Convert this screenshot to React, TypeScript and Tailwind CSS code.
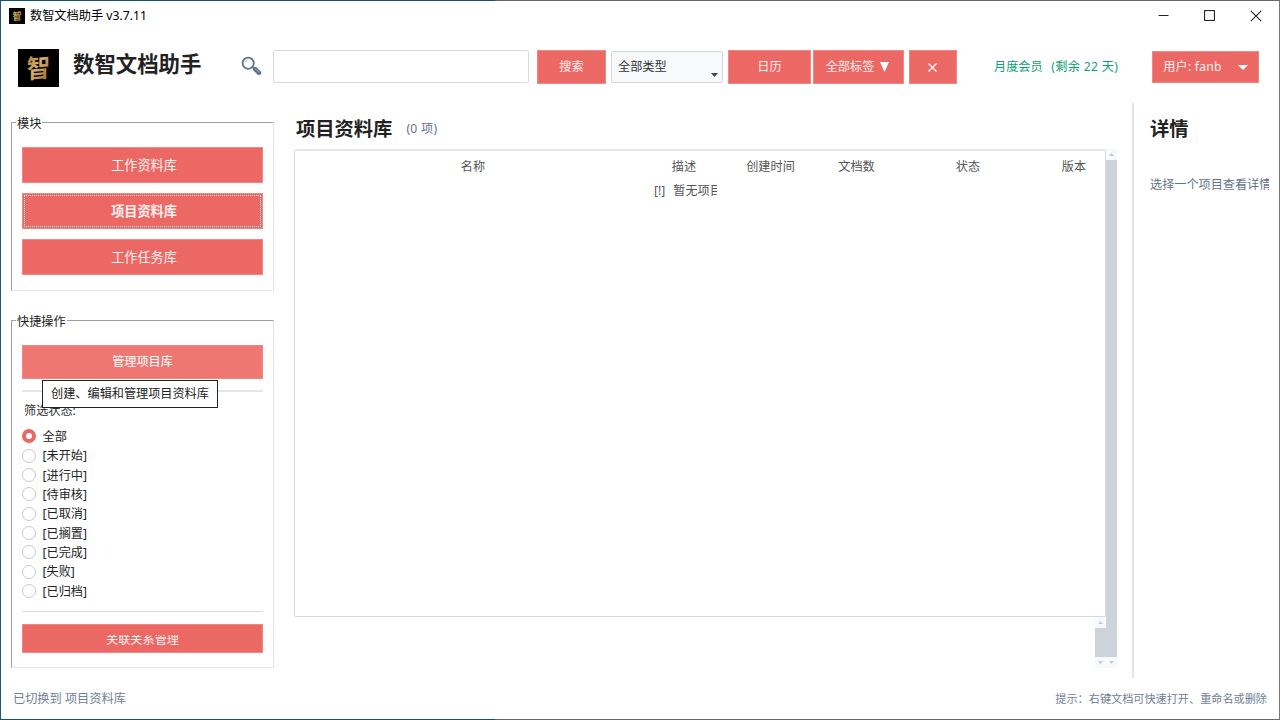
import * as React from "react";
import clsx from "clsx";

const modules = [
  { name: "工作资料库", active: false },
  { name: "项目资料库", active: true },
  { name: "工作任务库", active: false },
];

const statuses = [
  "全部",
  "[未开始]",
  "[进行中]",
  "[待审核]",
  "[已取消]",
  "[已搁置]",
  "[已完成]",
  "[失败]",
  "[已归档]",
];

const columns = [
  { name: "名称", width: "w-[356px]" },
  { name: "描述", width: "w-[66px]" },
  { name: "创建时间", width: "w-[107px]" },
  { name: "文档数", width: "w-[65px]" },
  { name: "状态", width: "w-[158px]" },
  { name: "版本", width: "w-[54px]" },
];

function RedButton({ className, children }: { className?: string; children: React.ReactNode }) {
  return (
    <button
      type="button"
      className={clsx(
        "flex shrink-0 items-center justify-center border border-[#f08783] bg-[#ec6864] whitespace-nowrap text-white/90",
        className,
      )}
    >
      {children}
    </button>
  );
}

function Group({ title, className, children }: { title: string; className?: string; children: React.ReactNode }) {
  return (
    <section
      className={clsx(
        "relative flex w-[263px] shrink-0 flex-col border border-t-[#a0a0a0] border-r-[#e6e6e6] border-b-[#e6e6e6] border-l-[#a0a0a0] px-[10px]",
        className,
      )}
    >
      <h2 className="absolute -top-[7px] left-[4px] bg-white pr-px pl-px text-[12.15px] leading-[16px] text-[#222]">
        {title}
      </h2>
      {children}
    </section>
  );
}

function Logo({ className }: { className?: string }) {
  return (
    <svg viewBox="0 0 40 38" preserveAspectRatio="none" className={className}>
      <defs>
        <linearGradient id="gold" x1="0" y1="0" x2="1" y2="1">
          <stop offset="0" stopColor="#a77432" />
          <stop offset="0.45" stopColor="#d6ad6c" />
          <stop offset="1" stopColor="#8a5a1e" />
        </linearGradient>
      </defs>
      <rect width="40" height="38" fill="#000" />
      <text
        x="0"
        y="0"
        textAnchor="middle"
        fontSize="24"
        fontWeight="700"
        fill="url(#gold)"
        transform="translate(20 28.5) skewY(-5) scale(0.95 1.07)"
      >
        智
      </text>
    </svg>
  );
}

function Arrow({ down }: { down?: boolean }) {
  return (
    <div className="flex h-[11px] w-[11px] items-center justify-center bg-[#f8f9fc]">
      <svg width="5" height="3" viewBox="0 0 5 3">
        <path d={down ? "M0 0h5L2.5 3z" : "M0 3h5L2.5 0z"} fill="#c5c9d1" />
      </svg>
    </div>
  );
}

function TitleBar() {
  return (
    <header className="flex h-[30px] shrink-0 items-center pr-[17px] pl-[8px]">
      <Logo className="-mt-px h-[16px] w-[16px]" />
      <span className="ml-[5px] text-[12.2px] text-black">数智文档助手 v3.7.11</span>
      <div className="-mt-px ml-auto flex items-center gap-[35px]">
        <svg width="11" height="11" viewBox="0 0 11 11" stroke="#222">
          <path d="M0.5 5.5h10" />
        </svg>
        <svg width="11" height="11" viewBox="0 0 11 11" fill="none" stroke="#111">
          <rect x="0.6" y="0.6" width="9.8" height="9.8" />
        </svg>
        <svg width="12" height="12" viewBox="0 0 12 12" stroke="#222" strokeWidth="1.1">
          <path d="M0.8 0.8l10.4 10.4M11.2 0.8L0.8 11.2" />
        </svg>
      </div>
    </header>
  );
}

function Toolbar() {
  return (
    <div className="flex h-[72px] shrink-0 items-start pt-[19px] pl-[17px] text-[12.15px]">
      <Logo className="-mt-px h-[38px] w-[41px]" />
      <h1 className="mt-px ml-[14px] w-[160px] text-[21.4px] leading-[26px] font-bold text-[#222]">数智文档助手</h1>
      <svg width="21" height="20" viewBox="0 0 21 20" className="mt-[6px] ml-[8px]" fill="none">
        <path d="M11.8 11.4l1.6 1.4" stroke="#64748b" strokeWidth="2" />
        <path d="M14.2 13.2l3.8 3.6" stroke="#5c708b" strokeWidth="4.4" strokeLinecap="round" />
        <path d="M14.2 12.8l3.6 3.2" stroke="#a3b0c0" strokeWidth="1" strokeLinecap="round" />
        <circle cx="7.2" cy="7.2" r="5.6" fill="#fff" stroke="#64748b" strokeWidth="1.8" />
        <path d="M4.4 6.4a3.1 3.1 0 0 1 2.4-2.4" stroke="#b8c2cf" />
      </svg>
      <input className="ml-[11px] h-[33px] w-[256px] rounded-[2px] border border-[#d5dbe0] bg-white" />
      <RedButton className="ml-[8px] h-[34px] w-[69px]">搜索</RedButton>
      <div className="relative ml-[5px] mt-px flex h-[32px] w-[112px] items-center rounded-[2px] border border-[#d3d7dc] bg-[#f8f9fb] pl-[6px] text-[#333]">
        全部类型
        <svg width="7" height="4" viewBox="0 0 7 4" className="absolute right-[4px] bottom-[5px]">
          <path d="M0 0h7L3.5 4z" fill="#444" />
        </svg>
      </div>
      <RedButton className="ml-[5px] h-[34px] w-[83px]">日历</RedButton>
      <RedButton className="ml-[2px] h-[34px] w-[91px] pr-[2px]">
        全部标签
        <svg width="9" height="10" viewBox="0 0 8 10" preserveAspectRatio="none" className="ml-[6px]">
          <path d="M0 0h8L4 10z" fill="#fff" />
        </svg>
      </RedButton>
      <RedButton className="ml-[5px] h-[34px] w-[48px] pr-px">
        <svg width="9" height="9" viewBox="0 0 9 9" stroke="#fff" strokeWidth="1.3">
          <path d="M0.5 0.5l8 8M8.5 0.5l-8 8" />
        </svg>
      </RedButton>
      <span className="mt-[8px] ml-[37px] w-[126px] leading-[18px] whitespace-pre text-[#0f9f72]">
        月度会员 <span className="ml-[2px] tracking-[0.35px]"> (剩余 22 天)</span>
      </span>
      <RedButton className="mt-px ml-[32px] h-[32px] w-[107px]">
        <span className="tracking-[0.25px]">用户: fanb</span>
        <svg width="10" height="5" viewBox="0 0 10 5" className="ml-[16px]">
          <path d="M0 0h10L5 5z" fill="#fff" />
        </svg>
      </RedButton>
    </div>
  );
}

function Sidebar() {
  return (
    <aside className="flex w-[263px] shrink-0 flex-col pt-[19px] text-[12.15px]">
      <Group title="模块" className="h-[169px] gap-[10px] pt-[24px]">
        {modules.map((m) => (
          <RedButton
            key={m.name}
            className={clsx("relative h-[36px] w-[241px] pt-[2px] pl-[3px] text-[13.1px]", m.active && "font-bold")}
          >
            {m.name}
            {m.active && <span className="absolute inset-[1px] border border-dotted border-white/80" />}
          </RedButton>
        ))}
      </Group>

      <Group title="快捷操作" className="mt-[29px] h-[348px] pt-[24px]">
        <button
          type="button"
          className="h-[34px] w-[241px] shrink-0 border border-[#f08783] bg-[#ee7772] text-white"
        >
          管理项目库
        </button>
        <hr className="mt-[11px] h-[2px] shrink-0 border-0 bg-[#e2e7eb]" />
        <p className="mt-[10px] pl-[2px] leading-[18px] text-[#333]">筛选状态:</p>
        <ul className="mt-[7px]">
          {statuses.map((s, i) => (
            <li key={s} className="flex h-[19.35px] items-center text-[#222]">
              <span
                className={clsx(
                  "-mt-px mr-[6.5px] h-[14px] w-[14px] shrink-0 rounded-full",
                  i === 0 ? "border-[4.5px] border-[#ea6864] bg-white" : "border border-[#c9c9c9]",
                )}
              />
              <span className="pt-px">{s}</span>
            </li>
          ))}
        </ul>
        <hr className="mt-[10px] h-px shrink-0 border-0 bg-[#d3dae0]" />
        <RedButton className="mt-[12px] h-[29px] w-[241px]">
          <span className="mt-[3px] flex h-[10px] items-center overflow-hidden">关联关系管理</span>
        </RedButton>
        <div
          role="tooltip"
          className="absolute top-[59px] left-[30px] flex h-[28px] w-[176px] items-center justify-center border border-[#222] bg-white pt-px whitespace-nowrap text-[#222]"
        >
          创建、编辑和管理项目资料库
        </div>
      </Group>
    </aside>
  );
}

function ProjectTable() {
  return (
    <div className="flex h-[519px] items-start">
      <div className="flex flex-col items-end">
        <div className="h-[468px] w-[812px] rounded-[2px] border border-t-2 border-[#d5dae0] border-t-[#e2e7ea] pt-[4px] text-[#555]">
          <div className="flex h-[24px] items-center">
            {columns.map((c) => (
              <span key={c.name} className={clsx("shrink-0 text-center whitespace-nowrap", c.width)}>
                {c.name}
              </span>
            ))}
          </div>
          <div className="flex h-[24px] items-center pl-[357px]">
            <span className="w-[65px] overflow-hidden pl-[2px] leading-[18px] whitespace-pre">
              <span className="mr-[8px]">[!]</span>暂无项目
            </span>
          </div>
        </div>
        <div className="flex h-[51px] w-[11px] flex-col bg-[#ced3db]">
          <Arrow />
          <div className="grow" />
          <Arrow down />
        </div>
      </div>
      <div className="flex h-[519px] w-[11px] flex-col bg-[#ced3db]">
        <Arrow />
        <div className="grow" />
        <Arrow down />
      </div>
    </div>
  );
}

export default function App() {
  return (
    <div className="flex h-[720px] w-[1280px] flex-col overflow-hidden bg-white font-['Noto_Sans','Noto_Sans_CJK_SC',sans-serif]">
      <div className="flex h-px shrink-0">
        <div className="w-[495px] bg-[#14506b]" />
        <div className="grow bg-[#686868]" />
      </div>
      <div className="flex grow flex-col border-r border-l border-r-[#777] border-l-[#1c587a]">
        <TitleBar />
        <Toolbar />
        <main className="flex h-[575px] shrink-0 pl-[10px] text-[12.15px]">
          <Sidebar />
          <section className="ml-[20px] flex w-[824px] shrink-0 flex-col">
            <div className="flex h-[46px] shrink-0 items-center pt-[6px] pl-[2px]">
              <h2 className="text-[19.3px] leading-[26px] font-bold text-[#222]">项目资料库</h2>
              <span className="ml-[14px] tracking-[0.3px] text-[#64748b]">(0 项)</span>
            </div>
            <ProjectTable />
          </section>
          <div className="ml-[14px] w-[2px] shrink-0 bg-[#e0e5ea]" />
          <section className="ml-[16px] w-[119px] overflow-hidden pt-[13px]">
            <h2 className="text-[19.3px] leading-[26px] font-bold text-[#222]">详情</h2>
            <p className="mt-[34px] leading-[18px] whitespace-nowrap text-[#64748b]">选择一个项目查看详情</p>
          </section>
        </main>
        <footer className="flex h-[41px] items-center justify-between pt-px pr-[12px] pl-[12px] text-[12.2px] text-[#718096]">
          <span>已切换到 项目资料库</span>
          <span className="text-[11.15px]">提示：右键文档可快速打开、重命名或删除</span>
        </footer>
      </div>
      <div className="flex h-px shrink-0">
        <div className="w-[495px] bg-[#14506b]" />
        <div className="grow bg-[#686868]" />
      </div>
    </div>
  );
}
